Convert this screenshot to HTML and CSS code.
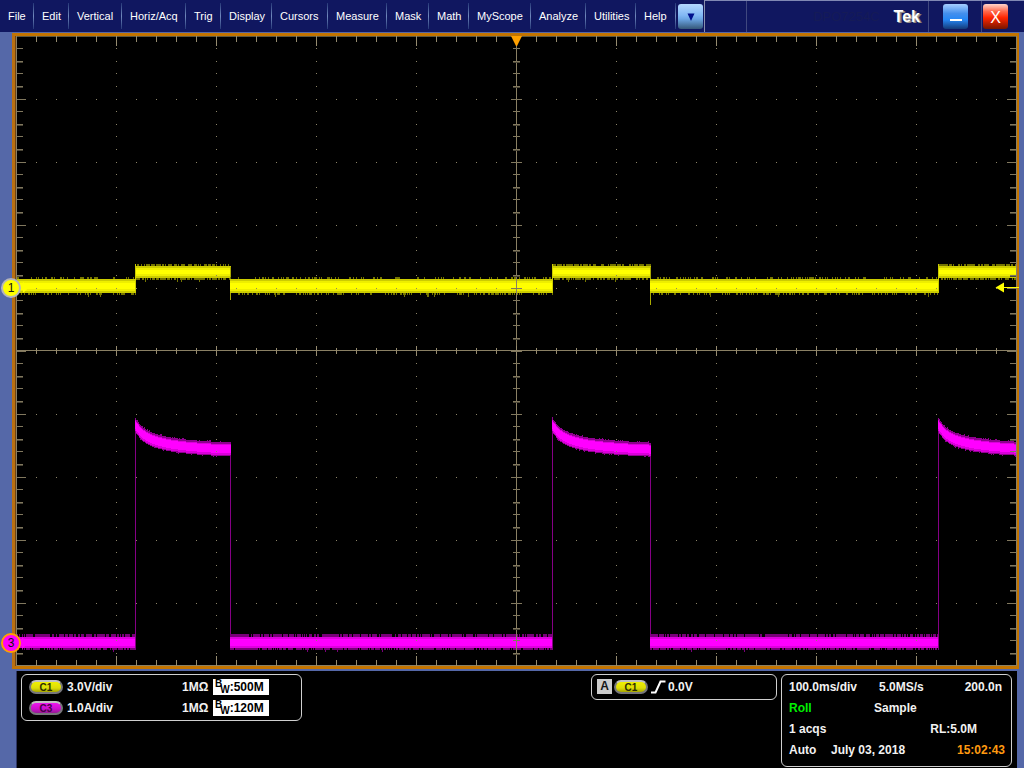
FILE: index.html
```html
<!DOCTYPE html>
<html lang="en">
<head>
<meta charset="utf-8">
<title>Tek Oscilloscope</title>
<link rel="stylesheet" href="styles.css">
</head>
<body>
<div class="app">
  <header class="topbar">
    <nav class="menu" aria-label="Main menu">
      <button>File</button><button>Edit</button><button>Vertical</button><button>Horiz/Acq</button><button>Trig</button><button>Display</button><button>Cursors</button><button>Measure</button><button>Mask</button><button>Math</button><button>MyScope</button><button>Analyze</button><button>Utilities</button><button>Help</button>
    </nav>
    <button class="key more" aria-label="More menus"><svg width="8" height="8" viewBox="0 0 8 8"><path d="M0.5 0.5h7L4 8z" fill="#00108c"/></svg></button>
    <div class="titlebar">
      <div class="slot"></div>
      <div class="brand"><span class="model">DPO7254C</span><span class="logo">Tek</span></div>
      <div class="window-slot"><button class="key minimize" aria-label="Minimize"><svg width="12" height="2" viewBox="0 0 12 2"><path d="M0 0h12v2H0z" fill="#fff"/></svg></button></div>
      <div class="window-slot"><button class="key close" aria-label="Close">X</button></div>
    </div>
  </header>

  <main class="scope">
    <svg class="plot" id="plot" viewBox="17 36 1000 630" preserveAspectRatio="none" role="img" aria-label="Channel 1 and channel 3 waveforms"></svg>
    <span class="channel ch1">1</span>
    <span class="channel ch3">3</span>
  </main>

  <footer class="readouts">
    <section class="box channels">
      <div class="row"><span class="pill yellow">C1</span><span class="scale">3.0V/div</span><span class="ohms">1MΩ</span><span class="bandwidth"><span class="b">B</span><span class="w">W</span>:500M</span></div>
      <div class="row"><span class="pill magenta">C3</span><span class="scale">1.0A/div</span><span class="ohms">1MΩ</span><span class="bandwidth"><span class="b">B</span><span class="w">W</span>:120M</span></div>
    </section>
    <section class="box trigger">
      <div class="row"><span class="source">A</span><span class="pill yellow">C1</span><svg class="edge" width="15" height="14" viewBox="0 0 15 14"><path d="M0 12.5h4.5L9.5 1.5H14.5" fill="none" stroke="#fff" stroke-width="2"/></svg><span>0.0V</span></div>
    </section>
    <section class="box timebase">
      <div class="row rate"><span>100.0ms/div</span><span>5.0MS/s</span><span class="end">200.0n</span></div>
      <div class="row mode"><span class="green">Roll</span><span>Sample</span></div>
      <div class="row acqs"><span>1 acqs</span><span>RL:5.0M</span></div>
      <div class="row clock"><span>Auto</span><span>July 03, 2018</span><time class="orange">15:02:43</time></div>
    </section>
  </footer>
</div>
<script src="plot.js"></script>
</body>
</html>
```
FILE: styles.css
```css
* { box-sizing: border-box; }
body { margin: 0; background: #5568a8; font-family: "Liberation Sans", Arial, sans-serif; }
button { font-family: inherit; border: 0; padding: 0; margin: 0; }
.app { min-height: 100vh; display: grid; grid-template-rows: 32px 1fr auto; }

.topbar { display: flex; background: #101760; color: #fff; }
.menu { display: grid; grid-template-columns: 34px 35px 53px 64px 35px 51px 56px 59px 42px 40px 62px 55px 50px 40px; }
.menu button {
  background: linear-gradient(#263878, #7088bd 50%, #263878) right center / 1px 26px no-repeat;
  color: #fff; font-size: 11px; text-align: left; padding-left: 8px; white-space: nowrap;
}
.key { width: 25px; height: 25px; border-radius: 3px; display: flex; align-items: center; justify-content: center; }
.more { margin: 4px 1px 0 2px; background: linear-gradient(#b4d8ff, #82b8f4 45%, #6ca6e4 60%, #355778); }
.titlebar {
  flex: 1; display: grid; grid-template-columns: 42px 1fr 53px 42px;
  border-top: 1px solid #8088b4; border-left: 1px solid #8990ad;
}
.slot, .brand, .window-slot { border-right: 1px solid #40487f; }
.brand { display: flex; align-items: center; justify-content: flex-end; gap: 14px; padding-right: 8px; }
.model { font-size: 13px; color: #151b57; }
.logo { font-size: 16px; font-weight: bold; color: #fff; text-shadow: 1px 1px 0 #96938f, 2px 1px 0 #77716b; }
.window-slot { display: flex; align-items: flex-start; justify-content: flex-end; padding: 3px 13px 0 0; }
.window-slot:last-child { border: 0; padding-right: 16px; }
.minimize { background: linear-gradient(#a6ceff, #438fed 38%, #2687f5 62%, #143a78); padding-top: 7px; }
.close { background: linear-gradient(#ffd5cc, #ff674a 30%, #ff2500 55%, #751600); color: #fff; font-size: 16px; padding-top: 2px; }

.scope {
  position: relative; margin: 1px 5px 2px 12px;
  border: 3px solid #c37400; border-right-width: 2px; border-left-color: #b97012;
  padding-left: 2px; background: linear-gradient(90deg, #704313 1px, #8a8064 1px, #8a8064 2px, #000 2px);
  display: flex; min-height: 400px;
}
.plot { display: block; width: 100%; height: 0; min-height: 100%; overflow: visible; }
.channel {
  position: absolute; left: -4px; transform: translate(-50%, -50%);
  width: 20px; height: 20px; border-radius: 50%; border: 2px solid;
  font-size: 12px; line-height: 16px; text-align: center; color: #111;
}
.ch1 { top: 40%; background: #ffff00; border-color: #b5b5ba; }
.ch3 { top: 96.4%; background: #ff00ff; border-color: #ffa000; }

.readouts {
  margin: 0 7px 0 16px; padding: 3px 5px 1px 4px; border: 0 solid #303765; border-left-width: 1px;
  background: #000; color: #f2f2f2; font-size: 12px; font-weight: bold;
  display: grid; grid-template-columns: 281px 1fr 186px 231px; column-gap: 4px; align-items: start;
}
.box { border: 1px solid #d0d0d0; border-radius: 6px; }
.row { display: flex; align-items: center; height: 21px; white-space: nowrap; }
.channels { padding: 1px 7px 2px; }
.trigger { grid-column: 3; padding: 1px 5px 2px; }
.pill {
  width: 34px; height: 14px; flex: none; border: 2px solid #77777b; border-top-color: #c0c0c0; border-radius: 8px;
  font-size: 10px; line-height: 11px; text-align: center; color: #2c2b00;
}
.yellow { background: linear-gradient(#f0f000, #dddd08 60%, #a5a500); }
.magenta { background: linear-gradient(#ee15ee, #cc0ecc 60%, #931c93); color: #460046; }
.scale { margin-left: 4px; width: 115px; }
.ohms { width: 31px; }
.bandwidth {
  display: flex; background: #fff; color: #000;
  width: 56px; height: 16px; line-height: 16px; padding-left: 2px;
}
.b, .w { font-size: 10px; line-height: 10px; }
.w { align-self: flex-end; margin-left: -2px; }
.source { background: #ccc; color: #151515; width: 15px; height: 15px; line-height: 15px; text-align: center; margin-right: 2px; }
.edge { margin: 0 2px 0 3px; }
.timebase { padding: 1px 6px 6px 7px; }
.rate { display: grid; grid-template-columns: 90px 1fr auto; }
.end { padding-right: 3px; }
.mode { display: grid; grid-template-columns: 85px 1fr; }
.acqs { justify-content: space-between; padding-right: 28px; }
.clock { display: grid; grid-template-columns: 42px 1fr auto; }
.green { color: #00f000; }
.orange { color: #ff9a10; }
```
FILE: plot.js
```js
(function () {
  var svg = document.getElementById("plot");
  var L = 17, T = 36, B = 665;
  var seed = 7;
  function rand() {
    seed = (seed * 16807) % 2147483647;
    return seed / 2147483647;
  }
  function box(x, y, w, h) { return "M" + x + " " + y + "h" + w + "v" + h + "h" + -w + "z"; }
  var out = "";
  function path(d, fill) { out += '<path shape-rendering="crispEdges" d="' + d + '" fill="' + fill + '"/>'; }
  function rect(x, y, w, h, fill) { path(box(x, y, w, h), fill); }

  var ticks = "", dim = "", soft = "";
  var i, k, x, y, major;
  for (i = 1; i < 50; i++) {
    x = 16 + i * 20;
    major = i % 5 === 0;
    ticks += box(x, T, 1, major ? 10 : 6);
    ticks += box(x, major ? 656 : 660, 1, major ? 10 : 6);
    ticks += box(x, major ? 346 : 348, 1, major ? 10 : 6);
  }
  for (k = 1; k < 50; k++) {
    y = Math.round(35.5 + k * 12.6);
    major = k % 5 === 0;
    dim += box(L, y, major ? 9 : 6, 1) + box(major ? 1007 : 1010, y, major ? 9 : 6, 1);
    dim += box(major ? 511 : 513, y, major ? 11 : 7, 1);
    if (k % 5 === 2 || k % 5 === 4) soft += box(L, y + 1, 6, 1) + box(1010, y + 1, 6, 1) + box(513, y + 1, 7, 1);
  }
  rect(L, T, 1000, 1, "#5e573f");
  rect(L, B, 1000, 1, "#8a8064");
  rect(1016, T, 1, 630, "#8a8064");

  /* noise fringe: runs of columns that reach past the solid core */
  function fringe(x1, x2, top, bottom, reachUp, reachDown, density, fill) {
    var d = "";
    for (var c = x1; c < x2; c++) {
      if (rand() < density) d += box(c, top - reachUp, 1, reachUp);
      if (rand() < density) d += box(c, bottom, 1, reachDown);
      if (rand() < 0.012) d += box(c, bottom, 1, reachDown + 2);
    }
    path(d, fill);
  }
  function band(x1, x2, top, bottom, inks, up, down, density) {
    fringe(x1, x2, top, bottom, up, down, density, inks[0]);
    rect(x1, top, x2 - x1, bottom - top, inks[1]);
    rect(x1, top + 2, x2 - x1, bottom - top - 4, inks[2]);
    rect(x1, top + 4, x2 - x1, bottom - top - 8, inks[3]);
  }

  var pulses = [[135, 231], [552, 651], [938, 1016]];
  var yellow = ["#747400", "#cccc00", "#eeee00", "#ffff00"];
  var magenta = ["#790079", "#df00df", "#ff00ff", "#ff00ff"];
  var start = L;
  pulses.forEach(function (p) {
    band(start, p[0] + 1, 279, 293, yellow, 2, 2, 0.3);
    band(start, p[0] + 1, 637, 648, magenta, 3, 2, 0.75);
    band(p[0], p[1], 266, 278, yellow, 2, 2, 0.65);
    rect(p[0], 264, 1, 27, "#cccc00");
    if (p[1] < 1000) rect(p[1] - 1, 267, 1, p[1] > 600 ? 38 : 33, "#aaaa00");
    rect(p[0], 422, 1, 226, "#850085");
    if (p[1] < 1000) rect(p[1] - 1, 450, 1, 198, "#850085");
    var halo = "", edge = "", core = "";
    for (var c = p[0]; c < p[1]; c++) {
      var t = c - p[0];
      var mid = Math.round(451 - 11 * Math.exp(-t / 8) - 15 * Math.exp(-t / 42));
      var extra = rand() < 0.18 ? 1 : 0;
      halo += box(c, mid - 7 - extra, 1, 14 + extra + (rand() < 0.15 ? 1 : 0));
      edge += box(c, mid - 5, 1, 11);
      core += box(c, mid - 4, 1, 8);
    }
    path(halo, "#900090");
    path(edge, "#d900d9");
    path(core, "#ff00ff");
    start = p[1] - 1;
  });

  /* grid dots sit on top of the traces */
  var dots = "";
  for (k = 1; k < 10; k++) {
    for (i = 1; i < 50; i++) {
      dots += box(16 + i * 20, Math.round(35.5 + k * 63), 1, 1);
    }
    for (i = 1; i < 50; i++) {
      dots += box(16 + k * 100, Math.round(35.5 + i * 12.6), 1, 1);
    }
  }
  path(dots, "#8c8468");
  rect(L, 350, 1000, 1, "#8a8064");
  rect(516, T, 1, 630, "#8a8064");
  path(ticks, "#958b70");
  path(soft, "#4a4536");
  path(dim, "#81785e");

  out += '<path d="M511 36h11l-5 10h-1z" fill="#ffa000"/>';
  rect(1003, 287, 16, 1, "#ffff00");
  out += '<path d="M995.500 287.500l8.500-5v10z" fill="#ffff00"/>';
  out += '<path d="M17 285h6v-3l6 5.500l-6 5.500v-3h-6z" fill="#ffff00"/>';
  out += '<path d="M17 640h5v-3l6 6l-6 6v-3h-5z" fill="#ff00ff"/>';
  svg.innerHTML = out;
})();
```
